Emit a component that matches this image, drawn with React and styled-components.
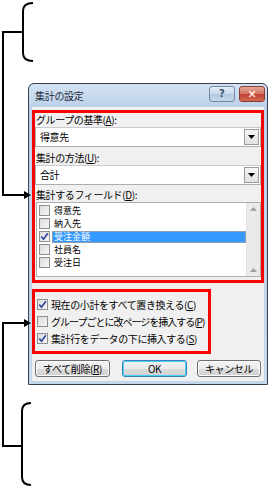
import React from "react"
import styled, { createGlobalStyle } from "styled-components"

const GlobalStyle = createGlobalStyle`
  html, body {
    margin: 0;
    padding: 0;
    background: #fff;
  }
  body {
    font-family: "Noto Sans CJK JP", "Noto Sans", sans-serif;
  }
`

const Page = styled.div`
  position: relative;
  width: 270px;
  height: 487px;
  box-sizing: border-box;
  padding: 83px 0 0 28px;
  background: #fff;
`
const Overlay = styled.svg`
  position: absolute;
  left: 0;
  top: 0;
  pointer-events: none;
`
const Dialog = styled.div`
  width: 240px;
  height: 302px;
  box-sizing: border-box;
  border: 1px solid #34414f;
  border-radius: 6px 6px 0 0;
  background: linear-gradient(#d3e2f3, #bed3ea 22px, #c4d7ec);
  padding: 0 3px 3px;
  display: flex;
  flex-direction: column;
`
const TitleBar = styled.div`
  height: 23px;
  display: flex;
  align-items: flex-start;
  justify-content: space-between;
`
const Title = styled.span`
  font-size: 10px;
  line-height: 12px;
  margin: 6px 0 0 3px;
  color: #1f2b3a;
  letter-spacing: -0.3px;
`
const CaptionButtons = styled.div`
  display: flex;
  gap: 4px;
  margin-right: -1px;
  margin-top: 2px;
`
const CaptionButton = styled.div`
  width: 26px;
  height: 16px;
  box-sizing: border-box;
  border: 1px solid ${p => (p.close ? "#8a3b33" : "#6f87a3")};
  border-radius: 3px;
  background: ${p =>
    p.close
      ? "linear-gradient(#e6a899, #d3705e 50%, #c1402f 51%, #d36b52)"
      : "linear-gradient(#e6eef8, #c9d9ec 50%, #b3c8e0 51%, #c6d7ea)"};
  display: flex;
  align-items: center;
  justify-content: center;
  font-family: "DejaVu Sans", sans-serif;
  font-weight: bold;
  font-size: ${p => (p.close ? "11px" : "10px")};
  line-height: 1;
  color: ${p => (p.close ? "#fff" : "#3c4f66")};
`
const Client = styled.div`
  flex: 1;
  background: #f0f0f0;
  display: flex;
  flex-direction: column;
  padding-top: 3px;
  font-size: 10px;
  color: #000;
  letter-spacing: -0.4px;
`
const RedBox = styled.div`
  width: ${p => p.width}px;
  height: ${p => p.height}px;
  margin-top: ${p => p.mt || 0}px;
  box-sizing: border-box;
  border: 3px solid #ff0000;
  display: flex;
  flex-direction: column;
  padding: ${p => p.pad || "0"};
`
const Label = styled.div`
  height: ${p => p.h}px;
  display: flex;
  align-items: flex-end;
  padding-left: 1px;
  line-height: 13px;
  padding-bottom: 1px;
  box-sizing: border-box;
`
const U = styled.span`
  text-decoration: underline;
`
const Combo = styled.div`
  height: 20px;
  box-sizing: border-box;
  border: 1px solid #abadb3;
  border-top-color: #c8cacf;
  background: #fff;
  display: flex;
  align-items: stretch;
`
const ComboText = styled.span`
  flex: 1;
  padding-left: 4px;
  line-height: 18px;
`
const DropButton = styled.div`
  width: 15px;
  box-sizing: border-box;
  margin: 1px;
  border: 1px solid #9a9a9a;
  background: linear-gradient(#f6f6f6, #e0e0e0);
  display: flex;
  align-items: center;
  justify-content: center;
`
const ListBox = styled.div`
  height: 75px;
  margin-left: 1px;
  box-sizing: border-box;
  border: 1px solid #abadb3;
  background: #fff;
  display: flex;
`
const Items = styled.div`
  flex: 1;
  padding-top: 1px;
`
const Item = styled.div`
  height: 13px;
  display: flex;
  align-items: center;
  padding-left: 2px;
`
const ItemText = styled.span`
  flex: 1;
  margin-left: 2px;
  padding-left: 1px;
  box-sizing: border-box;
  height: 12px;
  font-size: 9px;
  line-height: 10px;
  letter-spacing: 0;
  background: ${p => (p.selected ? "#3399ff" : "transparent")};
  border: 1px solid ${p => (p.selected ? "#8fa0b5" : "transparent")};
  color: ${p => (p.selected ? "#fff" : "#000")};
`
const ScrollBar = styled.div`
  width: 14px;
  background: #eaeaea;
  border-left: 1px solid #e0e0e0;
  display: flex;
  flex-direction: column;
  justify-content: space-between;
  align-items: center;
  padding: 4px 0;
  box-sizing: border-box;
`
const Box = styled.span`
  width: 11px;
  height: 11px;
  box-sizing: border-box;
  flex-shrink: 0;
  border: 1px solid #8e8f8f;
  background: linear-gradient(135deg, #dcdcdc, #f6f6f6);
  display: flex;
  align-items: center;
  justify-content: center;
`
const Option = styled.div`
  height: 17px;
  display: flex;
  align-items: center;
  gap: 3px;
  padding-left: 2px;
  line-height: 13px;
  white-space: nowrap;
`
const OptionText = styled.span`
  letter-spacing: ${p => (p.tight ? "-1px" : "-0.4px")};
`
const ButtonRow = styled.div`
  display: flex;
  padding: 6px 0 0 3px;
`
const Button = styled.div`
  width: ${p => p.w}px;
  height: 17px;
  margin-left: ${p => p.ml || 0}px;
  box-sizing: border-box;
  border: 1px solid ${p => (p.primary ? "#3c7fb1" : "#707070")};
  border-radius: 3px;
  background: linear-gradient(#f2f2f2, #ebebeb 50%, #dddddd 51%, #cfcfcf);
  box-shadow: inset 0 0 0 1px ${p => (p.primary ? "#48d2fb" : "#fcfcfc")};
  display: flex;
  align-items: center;
  justify-content: center;
  line-height: 13px;
  white-space: nowrap;
`

const Check = () => (
  <svg width="9" height="9" viewBox="0 0 9 9">
    <path d="M1.3 4.6 L3.5 7.2 L7.8 1.2" fill="none" stroke="#2a3f9c" strokeWidth="1.6" />
  </svg>
)

const CheckBox = ({ checked }) => <Box>{checked && <Check />}</Box>

const Tri = ({ up }) => (
  <svg width="7" height="4" viewBox="0 0 7 4">
    <path d={up ? "M0 4 L3.5 0 L7 4 Z" : "M0 0 L7 0 L3.5 4 Z"} fill={up ? "#a0a0a0" : "#000"} />
  </svg>
)

const fields = [
  { name: "得意先" },
  { name: "納入先" },
  { name: "受注金額", checked: true, selected: true },
  { name: "社員名" },
  { name: "受注日" },
]

const App = () => {
  return (
    <Page>
      <GlobalStyle />
      <Dialog>
        <TitleBar>
          <Title>集計の設定</Title>
          <CaptionButtons>
            <CaptionButton>?</CaptionButton>
            <CaptionButton close>✕</CaptionButton>
          </CaptionButtons>
        </TitleBar>
        <Client>
          <RedBox width={232} height={173}>
            <Label h={14}>
              グループの基準(<U>A</U>):
            </Label>
            <Combo>
              <ComboText>得意先</ComboText>
              <DropButton>
                <Tri />
              </DropButton>
            </Combo>
            <Label h={18}>
              集計の方法(<U>U</U>):
            </Label>
            <Combo>
              <ComboText>合計</ComboText>
              <DropButton>
                <Tri />
              </DropButton>
            </Combo>
            <Label h={17}>
              集計するフィールド(<U>D</U>):
            </Label>
            <ListBox>
              <Items>
                {fields.map(f => (
                  <Item key={f.name}>
                    <CheckBox checked={f.checked} />
                    <ItemText selected={f.selected}>{f.name}</ItemText>
                  </Item>
                ))}
              </Items>
              <ScrollBar>
                <Tri up />
                <Tri up />
              </ScrollBar>
            </ListBox>
          </RedBox>
          <RedBox width={179} height={65} mt={6} pad="4px 0 0 0">
            <Option>
              <CheckBox checked />
              <OptionText>
                現在の小計をすべて置き換える(<U>C</U>)
              </OptionText>
            </Option>
            <Option>
              <CheckBox />
              <OptionText tight>
                グループごとに改ページを挿入する(<U>P</U>)
              </OptionText>
            </Option>
            <Option>
              <CheckBox checked />
              <OptionText>
                集計行をデータの下に挿入する(<U>S</U>)
              </OptionText>
            </Option>
          </RedBox>
          <ButtonRow>
            <Button w={75}>
              すべて削除(<U>R</U>)
            </Button>
            <Button w={65} ml={12} primary>
              OK
            </Button>
            <Button w={64} ml={10}>
              キャンセル
            </Button>
          </ButtonRow>
        </Client>
      </Dialog>
      <Overlay width="270" height="487" viewBox="0 0 270 487">
        <g fill="none" stroke="#000" strokeWidth="2">
          <path d="M33 3 Q23 3 23 11 L23 53 Q23 61 33 61" />
          <path d="M23 32 L3 32 L3 195 L25 195" />
          <path d="M31 403 Q22 403 22 411 L22 477 Q22 485 31 485" />
          <path d="M22 446 L3 446 L3 323 L25 323" />
        </g>
        <polygon points="24,191 31,195 24,199" fill="#000" />
        <polygon points="24,319 31,323 24,327" fill="#000" />
      </Overlay>
    </Page>
  )
}

export default App
